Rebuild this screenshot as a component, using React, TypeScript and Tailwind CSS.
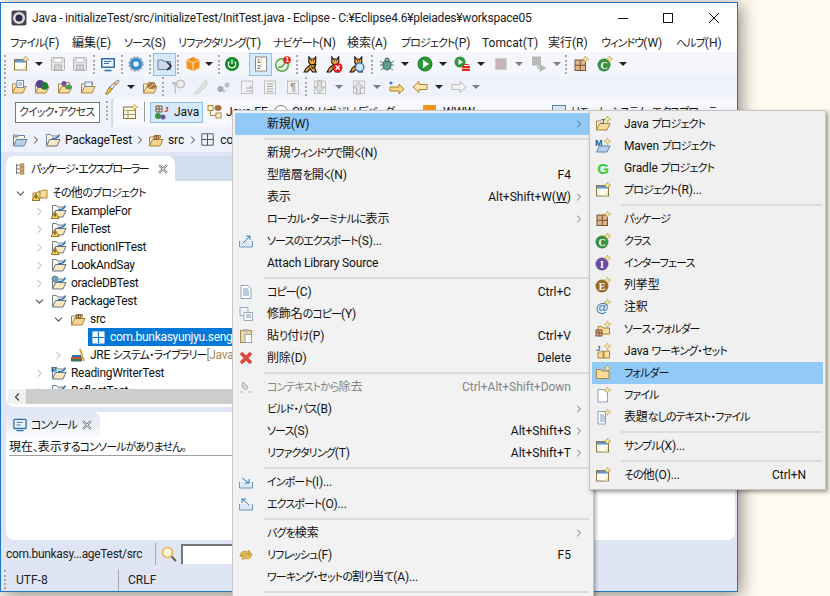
import type { ReactNode } from "react";
import { ChevronDown, ChevronRight } from "lucide-react";
import clsx from "clsx";
import { twMerge } from "tailwind-merge";

function I({ children, className }: { children: ReactNode; className?: string }) {
  return (
    <svg viewBox="0 0 16 16" className={twMerge("h-4 w-4 shrink-0", className)}>
      {children}
    </svg>
  );
}

// kana in the original UI font is much narrower than the kanji
function Jp({ t, tight }: { t: string; tight?: boolean }) {
  return (
    <>
      {t.split(/([\u3001\u3002\u3040-\u30ff]+)/).map((s, i) =>
        i % 2 ? (
          <span key={i} className={clsx("text-[11px]", tight ? "tracking-[-1.5px]" : "tracking-[-0.9px]")}>
            {s}
          </span>
        ) : (
          s
        ),
      )}
    </>
  );
}

const Star = () => (
  <path d="M12.5 0l1 2.2 2.3 1-2.3 1-1 2.3-1-2.3-2.3-1 2.3-1z" fill="#fdeea6" stroke="#b5923a" strokeWidth=".6" />
);

const OpenFolder = ({ front = "#fbdc9c", stroke = "#a9843c" }: { front?: string; stroke?: string }) => (
  <>
    <path d="M1.5 13.5V5h4l1-1.500h6V6" fill="#fff3d6" stroke={stroke} />
    <path d="M1.500 14h10.500l3-6.500H4.500z" fill={front} stroke={stroke} />
  </>
);

const Warn = () => (
  <>
    <path d="M4 8.500L8 15.500H0z" fill="#fcd34d" stroke="#7a5c10" strokeWidth=".8" />
    <path d="M4 10.500v3" stroke="#222" strokeWidth="1.100" />
  </>
);

const ProjectFolder = () => (
  <>
    <path d="M1.500 13V2.500h4l1 1.500h7" fill="#fff8e6" stroke="#6f7f92" />
    <path d="M1.500 14h10.500l3-6.500H4.500z" fill="#fbe8bd" stroke="#5f7186" />
    <path d="M7 6.500c3.500.5 6-.5 7.500-4" stroke="#2c6fb7" strokeWidth="1.500" fill="none" />
  </>
);

const PlainFolderNew = () => (
  <I>
    <path d="M1.500 13.500V4.500h4.500l1 1.500h7v7.500z" fill="#fbdc9c" stroke="#a9843c" />
    <Star />
  </I>
);

const WindowNew = () => (
  <I>
    <rect x="1.500" y="3.500" width="12" height="10.500" fill="#fffdf2" stroke="#8a7a4a" />
    <rect x="2" y="4" width="11" height="2.500" fill="#5f95d0" />
    <path d="M6 13.500c3 0 6-2 7-6v6z" fill="#f6e6a8" />
    <Star />
  </I>
);

const Floppy = () => (
  <>
    <rect x="1.500" y="1.500" width="13" height="13" rx="1" fill="#e8e8e8" stroke="#b4b4b4" />
    <rect x="4" y="2" width="8" height="4.500" fill="#fafafa" stroke="#c4c4c4" />
    <rect x="4.500" y="9" width="7" height="5" fill="#d4d4d4" stroke="#b4b4b4" />
  </>
);

const Monitor = () => (
  <I>
    <rect x="1" y="2" width="14" height="10" rx="1" fill="#2f6ea8" />
    <rect x="2.500" y="3.500" width="11" height="7" fill="#f2f7fc" />
    <path d="M4 5.500h7M4 7.500h5" stroke="#2f6ea8" />
    <path d="M4.500 14.500h7" stroke="#2f6ea8" strokeWidth="1.600" />
  </I>
);

const GearBlue = () => (
  <I>
    <circle cx="8" cy="8" r="6.500" fill="#2d8ad2" stroke="#8fa7b8" strokeWidth="2.400" strokeDasharray="2 1.400" />
    <circle cx="8" cy="8" r="5" fill="#2d8ad2" />
    <circle cx="8" cy="8" r="2.800" fill="#e9f4fc" />
  </I>
);

const NavFolder = () => (
  <I>
    <path d="M1 13.500V4h5l1 1.500h6.500v8z" fill="#cfd9ea" stroke="#6d7f9c" />
    <path d="M10 6l4 4-4 4" stroke="#222" strokeWidth="1.500" fill="none" />
  </I>
);

const Cube = () => (
  <I>
    <path d="M8 1l6.500 3v8L8 15l-6.500-3V4z" fill="#f4941c" />
    <path d="M1.500 4L8 7l6.500-3M8 7v8" stroke="#fde3bd" strokeWidth="1" fill="none" />
  </I>
);

const Power = () => (
  <I>
    <circle cx="8" cy="8" r="7" fill="#0b8a1f" />
    <path d="M5.400 5.500a3.700 3.700 0 1 0 5.200 0" stroke="#fff" strokeWidth="1.300" fill="none" />
    <path d="M8 3.500v4.500" stroke="#fff" strokeWidth="1.300" />
  </I>
);

const Numbered = () => (
  <I>
    <rect x="2.500" y="1" width="11" height="14" fill="#fffdf5" stroke="#8c8c8c" />
    <text x="4" y="7" fontSize="6" fill="#333" fontFamily="Liberation Sans">1</text>
    <text x="4" y="13" fontSize="6" fill="#333" fontFamily="Liberation Sans">2</text>
    <path d="M8 2v12" stroke="#aaa" strokeDasharray="1 1" />
  </I>
);

const GreenBadge = () => (
  <I>
    <circle cx="7" cy="9" r="6.300" fill="#e8f7e6" stroke="#4aa43a" strokeWidth="1.400" />
    <path d="M3 11c3 1 6-1 7-5" stroke="#4aa43a" strokeWidth="1.300" fill="none" />
    <circle cx="12" cy="4" r="3.800" fill="#e32119" />
    <text x="10.600" y="6.400" fontSize="6.500" fontWeight="700" fill="#fff" fontFamily="Liberation Sans">1</text>
  </I>
);

const Cat = ({ children }: { children?: ReactNode }) => (
  <I className="h-[17px] w-[17px]">
    <path d="M7 8l-4 3.500L1 15h3l3-3 2 3h3.500l-1.500-4 1-3z" fill="#f0a63c" stroke="#111" strokeWidth="1" />
    <path d="M5 10l2 2M8 9l1 3M10.500 9l-.5 3" stroke="#111" strokeWidth=".9" />
    <path d="M5.500 .8l1.500 2h3.500l1.500-2v5.500L10.500 8H7L5.500 6.300z" fill="#f0a63c" stroke="#111" strokeWidth="1" />
    <path d="M7.500 4.500h.8M9.500 4.500h.8" stroke="#111" />
    {children}
  </I>
);

const Bug = () => (
  <I>
    <ellipse cx="8" cy="9" rx="4" ry="5" fill="#5f9f8e" stroke="#34604f" />
    <circle cx="8" cy="4" r="2" fill="#7ab5a3" stroke="#34604f" />
    <path d="M1 5l3 2M15 5l-3 2M1 9h3M15 9h-3M2 14l3-2M14 14l-3-2" stroke="#4e7c6e" />
  </I>
);

const Run = () => (
  <I>
    <circle cx="8" cy="8" r="7" fill="#2f9a3c" stroke="#1a6e26" />
    <path d="M6 4l6 4-6 4z" fill="#fff" />
  </I>
);

const RunExt = () => (
  <I>
    <circle cx="6" cy="6" r="5.500" fill="#2f9a3c" />
    <path d="M4.500 3l4.500 3-4.500 3z" fill="#fff" />
    <rect x="8" y="10" width="8" height="5" fill="#e02b20" />
    <rect x="10" y="8.500" width="4" height="2" fill="none" stroke="#e02b20" />
    <path d="M8 12.500h8" stroke="#fff" strokeWidth=".6" />
  </I>
);

const Stop = () => (
  <I>
    <rect x="2.500" y="2.500" width="11" height="11" fill="#c7b3b8" stroke="#cfcfcf" />
  </I>
);

const StopRun = () => (
  <I>
    <rect x="1" y="0.500" width="9" height="9" fill="#b9b9b9" />
    <path d="M8.500 8l7 4-7 4z" fill="#aebab0" />
    <rect x="6" y="9" width="3" height="4" fill="#c9c9c9" />
  </I>
);

const Grid = ({ stroke = "#7a5230", fill = "#dcb78d" }: { stroke?: string; fill?: string }) => (
  <>
    <rect x="2" y="4" width="10.500" height="10.500" fill={fill} stroke={stroke} />
    <path d="M7.250 4v10.500M2 9.250h10.500" stroke={stroke} />
  </>
);

const Letter = ({ bg, ch, size = 10 }: { bg: string; ch: string; size?: number }) => (
  <I>
    <circle cx="7" cy="9" r="6.500" fill={bg} />
    <text x="7" y="12.500" textAnchor="middle" fontSize={size} fontWeight="700" fill="#fff" fontFamily="Liberation Serif">
      {ch}
    </text>
    <Star />
  </I>
);

const GreyPage = ({ children }: { children?: ReactNode }) => (
  <I>
    <rect x="2.500" y="2" width="11" height="12.500" fill="#f1f1f1" stroke="#c2c2c2" />
    {children}
  </I>
);

const Arrow = ({ fill, stroke, flip }: { fill: string; stroke: string; flip?: boolean }) => (
  <I className={flip ? "-scale-x-100" : undefined}>
    <path d="M1 8l6-5.500V5.500h8v5H7v3z" fill={fill} stroke={stroke} />
  </I>
);

const Caret = ({ grey, className }: { grey?: boolean; className?: string }) => (
  <div
    className={clsx(
      "h-0 w-0 shrink-0 border-x-[4px] border-t-[4px] border-x-transparent",
      grey ? "border-t-[#7d7d7d]" : "border-t-[#222]",
      className,
    )}
  />
);

const Grip = ({ className }: { className?: string }) => (
  <div className={clsx("h-[19px] w-[2px] shrink-0 border-l-2 border-dotted border-[#a9a9a9]", className)} />
);

const PickBox = ({ children, className }: { children: ReactNode; className?: string }) => (
  <div
    className={clsx(
      "flex h-[23px] w-[23px] shrink-0 items-center justify-center border border-[#8fc0ec] bg-[#d6e9fa]",
      className,
    )}
  >
    {children}
  </div>
);

const Export = ({ down, up }: { down?: boolean; up?: boolean }) => (
  <I>
    <path d="M1.500 8v6h13V8" fill="#dbe7f3" stroke="#6f97bd" />
    {down && <path d="M4 4l7 5M11 5v4H7" stroke="#2f78b8" fill="none" />}
    {up && <path d="M11 9L4 3M4 7V3h4" stroke="#2f78b8" fill="none" />}
    {!down && !up && <path d="M5 10l7-7M8 3h4v4" stroke="#2f78b8" fill="none" />}
  </I>
);

const PageIcon = () => (
  <I>
    <path d="M3 1.500h7l3 3v10H3z" fill="#fff" stroke="#8ea3bb" />
    <path d="M5 5h5M5 7h6M5 9h6M5 11h6" stroke="#7a93ad" />
  </I>
);

const CloseMark = ({ className }: { className: string }) => (
  <svg viewBox="0 0 10 10" className={className}>
    <path d="M1 1l8 8M9 1L1 9" stroke="#777" strokeWidth="2.200" />
    <path d="M1 1l8 8M9 1L1 9" stroke="#fff" strokeWidth=".8" />
  </svg>
);

type Row = { label: string; icon?: ReactNode; key2?: ReactNode; arrow?: boolean; off?: boolean; on?: boolean };

const SEP = "sep" as const;

const mainMenu: (Row | typeof SEP)[] = [
  { label: "新規(W)", arrow: true, on: true },
  SEP,
  { label: "新規ウィンドウで開く(N)" },
  { label: "型階層を開く(N)", key2: "F4" },
  { label: "表示", key2: <>Alt+Shift+W(<span className="underline">W</span>)</>, arrow: true },
  { label: "ローカル・ターミナルに表示", arrow: true },
  { label: "ソースのエクスポート(S)...", icon: <Export /> },
  { label: "Attach Library Source" },
  SEP,
  { label: "コピー(C)", key2: "Ctrl+C", icon: <PageIcon /> },
  {
    label: "修飾名のコピー(Y)",
    icon: (
      <I>
        <path d="M2 1.500h8v8H2z" fill="#eef3f8" stroke="#9aaabb" />
        <path d="M6 6.500h8.500v8H6z" fill="#fff" stroke="#9aaabb" />
        <path d="M8 9h5M8 11h5" stroke="#7a93ad" />
      </I>
    ),
  },
  {
    label: "貼り付け(P)",
    key2: "Ctrl+V",
    icon: (
      <I>
        <rect x="2.500" y="2.500" width="11" height="12" fill="#e8d8a8" stroke="#a58f55" />
        <rect x="5.500" y="1" width="5" height="3" fill="#b8b8b8" />
        <path d="M7 6.500h6.500v8H7z" fill="#fff" stroke="#8ea3bb" />
      </I>
    ),
  },
  {
    label: "削除(D)",
    key2: "Delete",
    icon: (
      <I>
        <path d="M3 3l10 10M13 3L3 13" stroke="#e0463e" strokeWidth="3.600" />
      </I>
    ),
  },
  SEP,
  {
    label: "コンテキストから除去",
    key2: "Ctrl+Alt+Shift+Down",
    off: true,
    icon: (
      <I>
        <path d="M5 3l5 5-2 3-4-3z" fill="#d8d8d8" stroke="#aaa" />
        <path d="M2 13h3M10 13h4" stroke="#bbb" />
      </I>
    ),
  },
  { label: "ビルド・パス(B)", arrow: true },
  { label: "ソース(S)", key2: "Alt+Shift+S", arrow: true },
  { label: "リファクタリング(T)", key2: "Alt+Shift+T", arrow: true },
  SEP,
  { label: "インポート(I)...", icon: <Export down /> },
  { label: "エクスポート(O)...", icon: <Export up /> },
  SEP,
  { label: "バグを検索", arrow: true },
  {
    label: "リフレッシュ(F)",
    key2: "F5",
    icon: (
      <I>
        <path d="M2 9c0-4 4-6 8-4l1-2 2 5-5 0 1-1.500C7 5.500 4.500 7 5 10z" fill="#eebc4a" stroke="#a67c1f" strokeWidth=".6" />
        <path d="M14 7c0 4-4 6-8 4l-1 2-2-5 5 0-1 1.500c2 1 4.500-.5 4-3.500z" fill="#eebc4a" stroke="#a67c1f" strokeWidth=".6" />
      </I>
    ),
  },
  { label: "ワーキング・セットの割り当て(A)..." },
  SEP,
];

const subMenu: (Row | typeof SEP)[] = [
  {
    label: "Java プロジェクト",
    icon: (
      <I>
        <OpenFolder />
        <text x="5" y="8" fontSize="8" fontWeight="700" fill="#2c6fb7" fontFamily="Liberation Sans">J</text>
        <Star />
      </I>
    ),
  },
  {
    label: "Maven プロジェクト",
    icon: (
      <I>
        <path d="M1.500 14h10.500l3-6H4.500z" fill="#b9d0ea" stroke="#5d83ad" />
        <text x="0" y="8" fontSize="9" fontWeight="700" fill="#23598f" fontFamily="Liberation Sans">M</text>
        <Star />
      </I>
    ),
  },
  {
    label: "Gradle プロジェクト",
    icon: (
      <I>
        <text x="8" y="14" textAnchor="middle" fontSize="15" fontWeight="700" fill="#2fd12f" fontFamily="Liberation Sans">G</text>
      </I>
    ),
  },
  { label: "プロジェクト(R)...", icon: <WindowNew /> },
  SEP,
  { label: "パッケージ", icon: <I><Grid /><Star /></I> },
  { label: "クラス", icon: <Letter bg="#3a9141" ch="C" /> },
  { label: "インターフェース", icon: <Letter bg="#6a4fa8" ch="I" /> },
  { label: "列挙型", icon: <Letter bg="#9a6a2c" ch="E" /> },
  {
    label: "注釈",
    icon: (
      <I>
        <text x="7" y="13" textAnchor="middle" fontSize="13" fontWeight="700" fill="#3b7db8" fontFamily="Liberation Sans">@</text>
        <Star />
      </I>
    ),
  },
  {
    label: "ソース・フォルダー",
    icon: (
      <I>
        <path d="M3 13V5.500h4l1 1.500h6.500v6z" fill="#fbdc9c" stroke="#a9843c" />
        <rect x="1" y="9" width="6" height="6" fill="#dcb78d" stroke="#7a5230" />
        <path d="M4 9v6M1 12h6" stroke="#7a5230" />
        <Star />
      </I>
    ),
  },
  {
    label: "Java ワーキング・セット",
    icon: (
      <I>
        <text x="1" y="8" fontSize="8" fontWeight="700" fill="#2c6fb7" fontFamily="Liberation Sans">J</text>
        <path d="M3 15V9h3l1-1h2v7zM8 15V9h2l1-1h3.500v7z" fill="#fbdc9c" stroke="#a9843c" />
        <Star />
      </I>
    ),
  },
  { label: "フォルダー", icon: <PlainFolderNew />, on: true },
  {
    label: "ファイル",
    icon: (
      <I>
        <path d="M3 2.500h6l3.500 3.500v9H3z" fill="#fff" stroke="#8ea3bb" />
        <Star />
      </I>
    ),
  },
  {
    label: "表題なしのテキスト・ファイル",
    icon: (
      <I>
        <path d="M3 2.500h7.500v12.500H3z" fill="#fff" stroke="#8ea3bb" />
        <path d="M5 6h4M5 8h5M5 10h5M5 12h5" stroke="#7a93ad" />
        <Star />
      </I>
    ),
  },
  SEP,
  { label: "サンプル(X)...", icon: <WindowNew /> },
  SEP,
  { label: "その他(O)...", key2: "Ctrl+N", icon: <WindowNew /> },
];

const menuBar = [
  ["ファイル(F)", "w-[62px]"],
  ["編集(E)", "w-[52px]"],
  ["ソース(S)", "w-[54px]"],
  ["リファクタリング(T)", "w-[95px]"],
  ["ナビゲート(N)", "w-[74px]"],
  ["検索(A)", "w-[54px]"],
  ["プロジェクト(P)", "w-[81px]"],
  ["Tomcat(T)", "w-[66px]"],
  ["実行(R)", "w-[53px]"],
  ["ウィンドウ(W)", "w-[75px]"],
  ["ヘルプ(H)", "w-[60px]"],
];

const tree: { label: string; pad: string; twist?: "open" | "closed"; icon: ReactNode; extra?: string; on?: boolean }[] = [
  {
    label: "その他のプロジェクト",
    pad: "pl-[6px]",
    twist: "open",
    icon: (
      <I>
        <path d="M7 13V6h3l1-1h4v8z" fill="#fbdc9c" stroke="#a9843c" />
        <path d="M1 14V8h3l1-1h3v7z" fill="#fbdc9c" stroke="#a9843c" />
        <Warn />
      </I>
    ),
  },
  { label: "ExampleFor", pad: "pl-[25px]", twist: "closed", icon: <I><ProjectFolder /><Warn /></I> },
  { label: "FileTest", pad: "pl-[25px]", twist: "closed", icon: <I><ProjectFolder /><Warn /></I> },
  { label: "FunctionIFTest", pad: "pl-[25px]", twist: "closed", icon: <I><ProjectFolder /><Warn /></I> },
  { label: "LookAndSay", pad: "pl-[25px]", twist: "closed", icon: <I><ProjectFolder /></I> },
  {
    label: "oracleDBTest",
    pad: "pl-[25px]",
    twist: "closed",
    icon: (
      <I>
        <ProjectFolder />
        <circle cx="4" cy="4" r="3" fill="#6aa3d8" stroke="#4b7c3a" strokeWidth=".7" />
      </I>
    ),
  },
  { label: "PackageTest", pad: "pl-[25px]", twist: "open", icon: <I><ProjectFolder /></I> },
  {
    label: "src",
    pad: "pl-[44px]",
    twist: "open",
    icon: (
      <I>
        <OpenFolder front="#f6d28d" />
        <path d="M6 4h5v3H6zM8.500 4v3" stroke="#7a5230" fill="#e9c38d" />
      </I>
    ),
  },
  {
    label: "com.bunkasyunjyu.sengoku.initializeTest",
    pad: "pl-[63px]",
    on: true,
    icon: (
      <I className="ml-[4px] h-[13px] w-[13px]">
        <path d="M1 1h14v14H1z" fill="#fff" stroke="#dfe8f2" />
        <path d="M8 1v14M1 8h14" stroke="#0078d7" strokeWidth="1.500" />
      </I>
    ),
  },
  {
    label: "JRE システム・ライブラリー",
    extra: " [JavaSE-1.8]",
    pad: "pl-[44px]",
    twist: "closed",
    icon: (
      <I>
        <path d="M1 10h11v2H1z" fill="#c0532e" />
        <path d="M1 12h11v2.500H1z" fill="#3a7a5a" />
        <path d="M2 8h9v2H2z" fill="#2c6fb7" />
        <path d="M10 2l4 12" stroke="#d9a63c" strokeWidth="2" />
      </I>
    ),
  },
  {
    label: "ReadingWriterTest",
    pad: "pl-[25px]",
    twist: "closed",
    icon: (
      <I>
        <ProjectFolder />
        <text x="0" y="7" fontSize="7" fontWeight="700" fill="#23598f" fontFamily="Liberation Sans">M</text>
      </I>
    ),
  },
  { label: "ReflectTest", pad: "pl-[25px]", twist: "closed", icon: <I><ProjectFolder /></I> },
];

function MenuPanel({ items, gutter, rowInset, className }: { items: (Row | typeof SEP)[]; gutter: string; rowInset: string; className: string }) {
  return (
    <div className={className}>
      {items.map((item, i) =>
        item === SEP ? (
          <div key={i} className="flex h-[7px] items-center">
            <div className={clsx("h-[2px] flex-1 bg-[#dcdcdc]", gutter)} />
          </div>
        ) : (
          <div
            key={i}
            className={clsx(
              "flex h-[22px] items-center",
              rowInset,
              item.on && "bg-[#91c9f7]",
              item.off ? "text-[#858585]" : "text-[#111]",
            )}
          >
            <div className="flex w-[32px] shrink-0 justify-start pl-[3px]">{item.icon}</div>
            <span className="whitespace-nowrap tracking-[-0.15px]">
              <Jp t={item.label} />
            </span>
            <span className="ml-auto whitespace-nowrap">{item.key2}</span>
            <div className="flex w-[15px] shrink-0 justify-center">
              {item.arrow && <ChevronRight size={12} strokeWidth={1.5} color="#444" />}
            </div>
          </div>
        ),
      )}
    </div>
  );
}

export default function App() {
  return (
    <div className="relative h-[596px] w-[830px] overflow-hidden bg-[#fffaef] pt-[2px] font-['Roboto','Noto_Sans_CJK_JP',sans-serif] text-[12px] leading-none text-[#111] [font-feature-settings:'palt']">
      {/* window */}
      <div className="flex h-[590px] w-[738px] flex-col border border-[#1f74c8] bg-white shadow-[3px_3px_16px_rgba(0,0,0,0.45)]">
        <div className="flex h-[30px] shrink-0 items-center pl-[10px]">
          <I>
            <rect x="0.500" y="0.500" width="15" height="15" rx="2" fill="#4a4458" />
            <circle cx="8" cy="8" r="6" fill="#dcdcdc" />
            <circle cx="8" cy="8" r="3.500" fill="#2f2a4a" />
          </I>
          <span className="ml-[5px] whitespace-nowrap tracking-[-0.22px] text-[#222]">
            Java - initializeTest/src/initializeTest/InitTest.java - Eclipse - C:¥Eclipse4.6¥pleiades¥workspace05
          </span>
          <div className="ml-auto flex items-center">
            <div className="h-px w-[10px] bg-[#111]" />
            <div className="ml-[35px] h-[10px] w-[10px] border border-[#111]" />
            <svg viewBox="0 0 10 10" className="ml-[36px] mr-[18px] h-[10px] w-[10px]">
              <path d="M0 0l10 10M10 0L0 10" stroke="#111" />
            </svg>
          </div>
        </div>

        <div className="flex h-[19px] shrink-0 items-center pl-[9px] text-[#222]">
          {menuBar.map(([label, w]) => (
            <span key={label} className={clsx("whitespace-nowrap", w)}>
              <Jp t={label} />
            </span>
          ))}
        </div>

        {/* toolbar 1 */}
        <div className="flex h-[24px] shrink-0 items-center bg-[#f5f6fc]">
          <Grip className="ml-[3px]" />
          <div className="ml-[7px]"><WindowNew /></div>
          <Caret className="ml-[6px]" />
          <div className="ml-[7px]"><I><Floppy /></I></div>
          <div className="ml-[6px]"><I><Floppy /></I></div>
          <Grip className="ml-[5px]" />
          <div className="ml-[5px]"><Monitor /></div>
          <Grip className="ml-[5px]" />
          <div className="ml-[5px]"><GearBlue /></div>
          <Grip className="ml-[5px]" />
          <PickBox className="ml-[2px]"><NavFolder /></PickBox>
          <Grip className="ml-[1px]" />
          <div className="ml-[6px]"><Cube /></div>
          <Caret className="ml-[4px]" />
          <Grip className="ml-[5px]" />
          <div className="ml-[4px]"><Power /></div>
          <PickBox className="ml-[9px]"><Numbered /></PickBox>
          <div className="ml-[3px]"><GreenBadge /></div>
          <Grip className="ml-[5px]" />
          <div className="ml-[5px]"><Cat /></div>
          <div className="ml-[6px]">
            <Cat>
              <circle cx="11" cy="11" r="4.500" fill="#e5121a" />
              <path d="M9 9l4 4M13 9l-4 4" stroke="#fff" strokeWidth="1.300" />
            </Cat>
          </div>
          <div className="ml-[6px]">
            <Cat>
              <circle cx="10" cy="10.500" r="4" fill="#cfe4f7" stroke="#2c6fb7" strokeWidth="1.200" />
            </Cat>
          </div>
          <Grip className="ml-[5px]" />
          <div className="ml-[6px]"><Bug /></div>
          <Caret className="ml-[6px]" />
          <div className="ml-[8px]"><Run /></div>
          <Caret className="ml-[6px]" />
          <div className="ml-[7px]"><RunExt /></div>
          <Caret className="ml-[7px]" />
          <div className="ml-[8px]"><Stop /></div>
          <Caret grey className="ml-[6px]" />
          <div className="ml-[8px]"><StopRun /></div>
          <Caret grey className="ml-[6px]" />
          <Grip className="ml-[4px]" />
          <div className="ml-[6px]"><I><Grid /><Star /></I></div>
          <div className="ml-[8px]"><Letter bg="#3a9141" ch="C" /></div>
          <Caret className="ml-[6px]" />
        </div>

        {/* toolbar 2 */}
        <div className="flex h-[21px] shrink-0 items-center bg-[#f0f2fb]">
          <Grip className="ml-[3px]" />
          <div className="ml-[5px]">
            <I>
              <OpenFolder />
              <rect x="6" y="1.500" width="6.500" height="7" fill="#fff" stroke="#6d8bb0" />
              <path d="M7.500 4h3.500M7.500 6h3.500" stroke="#6d8bb0" />
            </I>
          </div>
          <div className="ml-[7px]">
            <I>
              <OpenFolder />
              <circle cx="6" cy="5" r="4" fill="#5b3f95" />
              <circle cx="10.500" cy="7" r="3.800" fill="#1f7a3a" />
            </I>
          </div>
          <div className="ml-[7px]">
            <I>
              <OpenFolder />
              <circle cx="7" cy="4.500" r="2.500" fill="#6a4fa8" />
              <ellipse cx="11.500" cy="8" rx="3.500" ry="2.500" fill="#4d9a5a" />
            </I>
          </div>
          <div className="ml-[7px]">
            <I>
              <OpenFolder />
              <rect x="5" y="3" width="7" height="4.500" fill="#eef3f8" stroke="#6d8bb0" />
            </I>
          </div>
          <div className="ml-[8px]">
            <I>
              <path d="M14 1l1 1.500L8 10 5.500 8z" fill="#f2f2f2" stroke="#555" strokeWidth=".8" />
              <path d="M10.500 4l2 2" stroke="#d19b2e" strokeWidth="2" />
              <path d="M5.500 8L8 10.500 4 15H1.500z" fill="#f0c24a" stroke="#8a6a14" strokeWidth=".8" />
            </I>
          </div>
          <Caret className="ml-[7px]" />
          <div className="ml-[7px]">
            <I>
              <OpenFolder />
              <ellipse cx="9.500" cy="7" rx="4.500" ry="3" fill="#a5743f" />
              <path d="M7 9l5-4" stroke="#e8cfa8" />
            </I>
          </div>
          <Grip className="ml-[4px]" />
          <div className="ml-[6px]">
            <I>
              <path d="M2 3h7v2.500H6v9H4.500v-9H2z" fill="#c4c4c4" />
              <circle cx="10.500" cy="5" r="4" fill="#ececec" stroke="#adadad" />
            </I>
          </div>
          <div className="ml-[6px]">
            <I>
              <path d="M14 1L8 8l-6 7 5-1 8-8z" fill="#e1e1e1" stroke="#d0d0d0" />
            </I>
          </div>
          <div className="ml-[8px]">
            <I>
              <circle cx="4.500" cy="10" r="3" fill="#a8a8a8" />
              <circle cx="11" cy="6" r="2.500" fill="#bcbcbc" />
              <circle cx="8" cy="12" r="1.500" fill="#cccccc" />
            </I>
          </div>
          <div className="ml-[7px]">
            <GreyPage>
              <path d="M7 9h6l-2-2M13 12H7" stroke="#ababab" fill="none" />
            </GreyPage>
          </div>
          <div className="ml-[7px]">
            <GreyPage>
              <path d="M5 5h6M5 7.500h6M5 10h6M5 12.500h6" stroke="#a8a8a8" />
            </GreyPage>
          </div>
          <div className="ml-[7px]">
            <GreyPage>
              <text x="8" y="12" textAnchor="middle" fontSize="10" fontWeight="700" fill="#999" fontFamily="Liberation Sans">¶</text>
            </GreyPage>
          </div>
          <Grip className="ml-[4px]" />
          <div className="ml-[5px]">
            <GreyPage>
              <path d="M5.500 2v6H2.500l5 6 5-6h-3V2z" fill="#dddddd" stroke="#b4b4b4" />
            </GreyPage>
          </div>
          <Caret grey className="ml-[7px]" />
          <div className="ml-[8px]">
            <GreyPage>
              <path d="M5.500 15V9H2.500l5-6 5 6h-3v6z" fill="#dddddd" stroke="#b4b4b4" />
            </GreyPage>
          </div>
          <Caret grey className="ml-[6px]" />
          <div className="ml-[8px]">
            <I className="-scale-x-100">
              <path d="M1 10l5-5v3h9v4H6v3z" fill="#f9d47e" stroke="#b1842a" />
              <path d="M14 2l1 1.500 1.500.5-1.500.5-1 1.500-1-1.500-1.500-.5 1.500-.5z" fill="#2c6fb7" />
            </I>
          </div>
          <div className="ml-[7px]"><Arrow fill="#fbe6b0" stroke="#b1842a" /></div>
          <Caret className="ml-[7px]" />
          <div className="ml-[8px]"><Arrow fill="#f2f2f2" stroke="#bdbdbd" flip /></div>
          <Caret grey className="ml-[5px]" />
        </div>

        {/* perspective row */}
        <div className="flex h-[30px] shrink-0 items-center bg-[#f0f2fb]">
          <div className="ml-[14px] flex h-[21px] w-[85px] shrink-0 items-center whitespace-nowrap border border-[#7a7a7a] bg-white pl-[3px] text-[#333]">
            <Jp t="クイック・アクセス" />
          </div>
          <Grip className="ml-[6px] mt-[-4px]" />
          <div className="ml-[3px] flex h-[30px] flex-1 items-center rounded-tl-[6px] border-l-2 border-[#d5d9e5] bg-[#f7f8fd]">
            <div className="ml-[9px]">
              <I>
                <rect x="1.500" y="3" width="12" height="11.500" fill="#fff6dc" stroke="#8a7a4a" />
                <path d="M1.500 6.500h12M6 6.500v8M1.500 10.500h12" stroke="#a89a6a" />
                <Star />
              </I>
            </div>
            <div className="ml-[6px] h-[20px] w-px bg-[#9a9a9a]" />
            <div className="ml-[5px] flex h-[21px] w-[53px] shrink-0 items-center border border-[#8fc0ec] bg-[#d6e9fa] pl-[3px]">
              <I>
                <path d="M2 2h6v6H2zM5 2v6M2 5h6" stroke="#7a5230" fill="none" />
                <text x="10" y="8" fontSize="8" fontWeight="700" fill="#c0392b" fontFamily="Liberation Sans">J</text>
                <circle cx="4" cy="12" r="3" fill="#3a9141" />
                <circle cx="9" cy="13" r="2.500" fill="#6a4fa8" />
              </I>
              <span className="ml-[4px]">Java</span>
            </div>
            <div className="ml-[4px]">
              <I>
                <rect x="1" y="1.500" width="5" height="5" fill="#fff3d6" stroke="#a9843c" />
                <rect x="9" y="9" width="5" height="5" fill="#fff3d6" stroke="#a9843c" />
                <path d="M3.500 6.500v5H9" stroke="#a9843c" fill="none" />
                <ellipse cx="11" cy="4" rx="3.500" ry="3" fill="#a5743f" />
              </I>
            </div>
            <span className="ml-[3px] w-[48px] whitespace-nowrap">Java EE</span>
            <div className="h-[14px] w-[14px] rounded-full border border-[#777] bg-white" />
            <span className="ml-[4px] w-[66px] whitespace-nowrap">
              <Jp t="CVS リポジトリ" />
            </span>
            <span className="w-[65px] whitespace-nowrap">
              <Jp t="デバッグ" />
            </span>
            <div className="h-[14px] w-[13px] bg-[#f4941c]" />
            <span className="ml-[7px] w-[109px] whitespace-nowrap">WWW</span>
            <div className="h-[14px] w-[14px] border border-[#5d83ad] bg-[#dbe7f3]" />
            <span className="ml-[5px] whitespace-nowrap">
              <Jp t="リモート・システム・エクスプローラー" />
            </span>
          </div>
        </div>

        {/* breadcrumb */}
        <div className="flex h-[25px] shrink-0 items-center bg-[#f0f2fb] pl-[11px]">
          <I>
            <path d="M1.500 10V3h4l1 1h6" fill="#dbe7f3" stroke="#6d8bb0" />
            <OpenFolder front="#b9d0ea" stroke="#5d83ad" />
          </I>
          <ChevronRight size={12} strokeWidth={2} color="#333" className="ml-[2px]" />
          <div className="ml-[3px]"><I><ProjectFolder /></I></div>
          <span className="ml-[4px] whitespace-nowrap tracking-[-0.2px]">PackageTest</span>
          <ChevronRight size={12} strokeWidth={2} color="#333" className="ml-[2px]" />
          <div className="ml-[2px]">
            <I>
              <OpenFolder front="#f6d28d" />
              <path d="M6 4h5v3H6zM8.500 4v3" stroke="#7a5230" fill="#e9c38d" />
            </I>
          </div>
          <span className="ml-[4px]">src</span>
          <ChevronRight size={12} strokeWidth={2} color="#333" className="ml-[3px]" />
          <div className="ml-[2px]">
            <I className="h-[13px] w-[13px]">
              <path d="M1 1h14v14H1zM8 1v14M1 8h14" stroke="#555" fill="none" strokeWidth="1.200" />
            </I>
          </div>
          <span className="ml-[6px] whitespace-nowrap">com.bunkasyunjyu</span>
        </div>

        {/* views */}
        <div className="flex min-h-0 flex-1 flex-col bg-[#e0e5f5]">
          <div className="mt-[4px] ml-[5px] mr-[2px] flex h-[251px] shrink-0 flex-col overflow-hidden rounded-[8px] bg-white">
            <div className="flex h-[25px] shrink-0 bg-[#d0deed]">
              <div className="flex w-[169px] items-center rounded-t-[8px] bg-white pl-[9px]">
                <I className="h-3 w-3">
                  <path d="M2 1v14M2 3h5M2 8h5M2 13h5" stroke="#555" fill="none" />
                  <path d="M7 1h5v4H7zM7 6h5v4H7zM7 11h5v4H7z" fill="#d8a868" stroke="#7a5230" strokeWidth=".6" />
                </I>
                <span className="ml-[4px] whitespace-nowrap">
                  <Jp t="パッケージ・エクスプローラー" tight />
                </span>
                <CloseMark className="ml-auto mr-[7px] h-[10px] w-[10px]" />
              </div>
            </div>
            <div className="min-h-0 flex-1 overflow-hidden pt-[3px] tracking-[-0.3px]">
              {tree.map((row) => (
                <div key={row.label} className={clsx("flex h-[18px] w-[226px] items-center overflow-hidden whitespace-nowrap", row.pad)}>
                  <div className="flex w-[16px] shrink-0 justify-center">
                    {row.twist === "open" && <ChevronDown size={13} strokeWidth={2} color="#555" />}
                    {row.twist === "closed" && <ChevronRight size={13} strokeWidth={1.800} color="#aaa" />}
                  </div>
                  {row.on ? (
                    <div className="ml-[3px] flex h-[18px] flex-1 items-center bg-[#0078d7] text-white">
                      {row.icon}
                      <span className="ml-[5px]">{row.label}</span>
                    </div>
                  ) : (
                    <>
                      <div className="ml-[4px]">{row.icon}</div>
                      <span className="ml-[4px]">
                        <Jp t={row.label} />
                      </span>
                      {row.extra && <span className="text-[#9b8a5a]">{row.extra}</span>}
                    </>
                  )}
                </div>
              ))}
            </div>
            <div className="mb-[3px] flex h-[15px] shrink-0">
              <div className="ml-[2px] flex w-[18px] items-center justify-center bg-[#f0f0f0]">
                <ChevronRight size={12} strokeWidth={3} color="#555" className="rotate-180" />
              </div>
              <div className="flex-1 bg-[#cdcdcd]" />
            </div>
          </div>

          <div className="mt-[5px] ml-[5px] mr-[2px] flex h-[128px] shrink-0 flex-col overflow-hidden rounded-[8px] bg-white">
            <div className="flex h-[26px] shrink-0">
              <div className="flex w-[94px] items-center rounded-t-[8px] bg-gradient-to-b from-[#dbe5f1] to-[#fbfcfe] pl-[7px]">
                <I className="h-[14px] w-[14px]">
                  <rect x="1" y="1.500" width="14" height="10.500" rx="1" fill="#eef3f8" stroke="#2f6ea8" strokeWidth="1.500" />
                  <path d="M4 5h7M4 8h5" stroke="#2f6ea8" />
                  <path d="M4 14.500h8" stroke="#2f6ea8" strokeWidth="1.500" />
                </I>
                <span className="ml-[4px] whitespace-nowrap">
                  <Jp t="コンソール" />
                </span>
                <CloseMark className="ml-auto mr-[8px] h-[10px] w-[10px]" />
              </div>
            </div>
            <div className="mx-[3px] flex h-[18px] shrink-0 items-center border-b border-[#a0a0a0] whitespace-nowrap">
              <span>
                <Jp t="現在、表示するコンソールがありません。" />
              </span>
            </div>
          </div>

          <div className="flex h-[28px] shrink-0 items-center pl-[5px]">
            <span className="w-[149px] whitespace-nowrap tracking-[-0.32px] text-[#222]">com.bunkasy...ageTest/src</span>
            <div className="h-[22px] w-px bg-[#a9a9a9]" />
            <svg viewBox="0 0 16 16" className="ml-[5px] h-[16px] w-[16px]">
              <circle cx="6.500" cy="6.500" r="5" fill="#fff6dc" stroke="#e8b24e" strokeWidth="1.500" />
              <path d="M10.500 10.500l4.500 4.500" stroke="#6b5a3a" strokeWidth="1.800" />
            </svg>
            <div className="ml-[4px] h-[20px] w-[100px] border-l-2 border-t-2 border-[#767676] bg-white" />
          </div>
          <div className="flex h-[23px] shrink-0 items-center text-[#222]">
            <Grip className="ml-[3px]" />
            <span className="ml-[10px] w-[102px]">UTF-8</span>
            <div className="h-[22px] w-px bg-[#a9a9a9]" />
            <span className="ml-[9px]">CRLF</span>
          </div>
        </div>
      </div>

      {/* context menu */}
      <MenuPanel
        items={mainMenu}
        gutter="ml-[31px] mr-[4px]"
        rowInset="mx-[2px] pr-[5px]"
        className="absolute left-[232px] top-[110px] h-[500px] w-[362px] border border-[#c6c6c6] bg-[#f2f2f2] pt-[2px] shadow-[2px_2px_3px_rgba(0,0,0,0.3)]"
      />
      <MenuPanel
        items={subMenu}
        gutter="ml-[30px] mr-[2px]"
        rowInset="mx-[1px] pr-[2px]"
        className="absolute left-[589px] top-[110px] h-[380px] w-[237px] border border-[#c6c6c6] bg-[#f0f0f0] pl-[1px] pr-[1px] pt-[2px] shadow-[2px_2px_4px_rgba(0,0,0,0.4)]"
      />
    </div>
  );
}
